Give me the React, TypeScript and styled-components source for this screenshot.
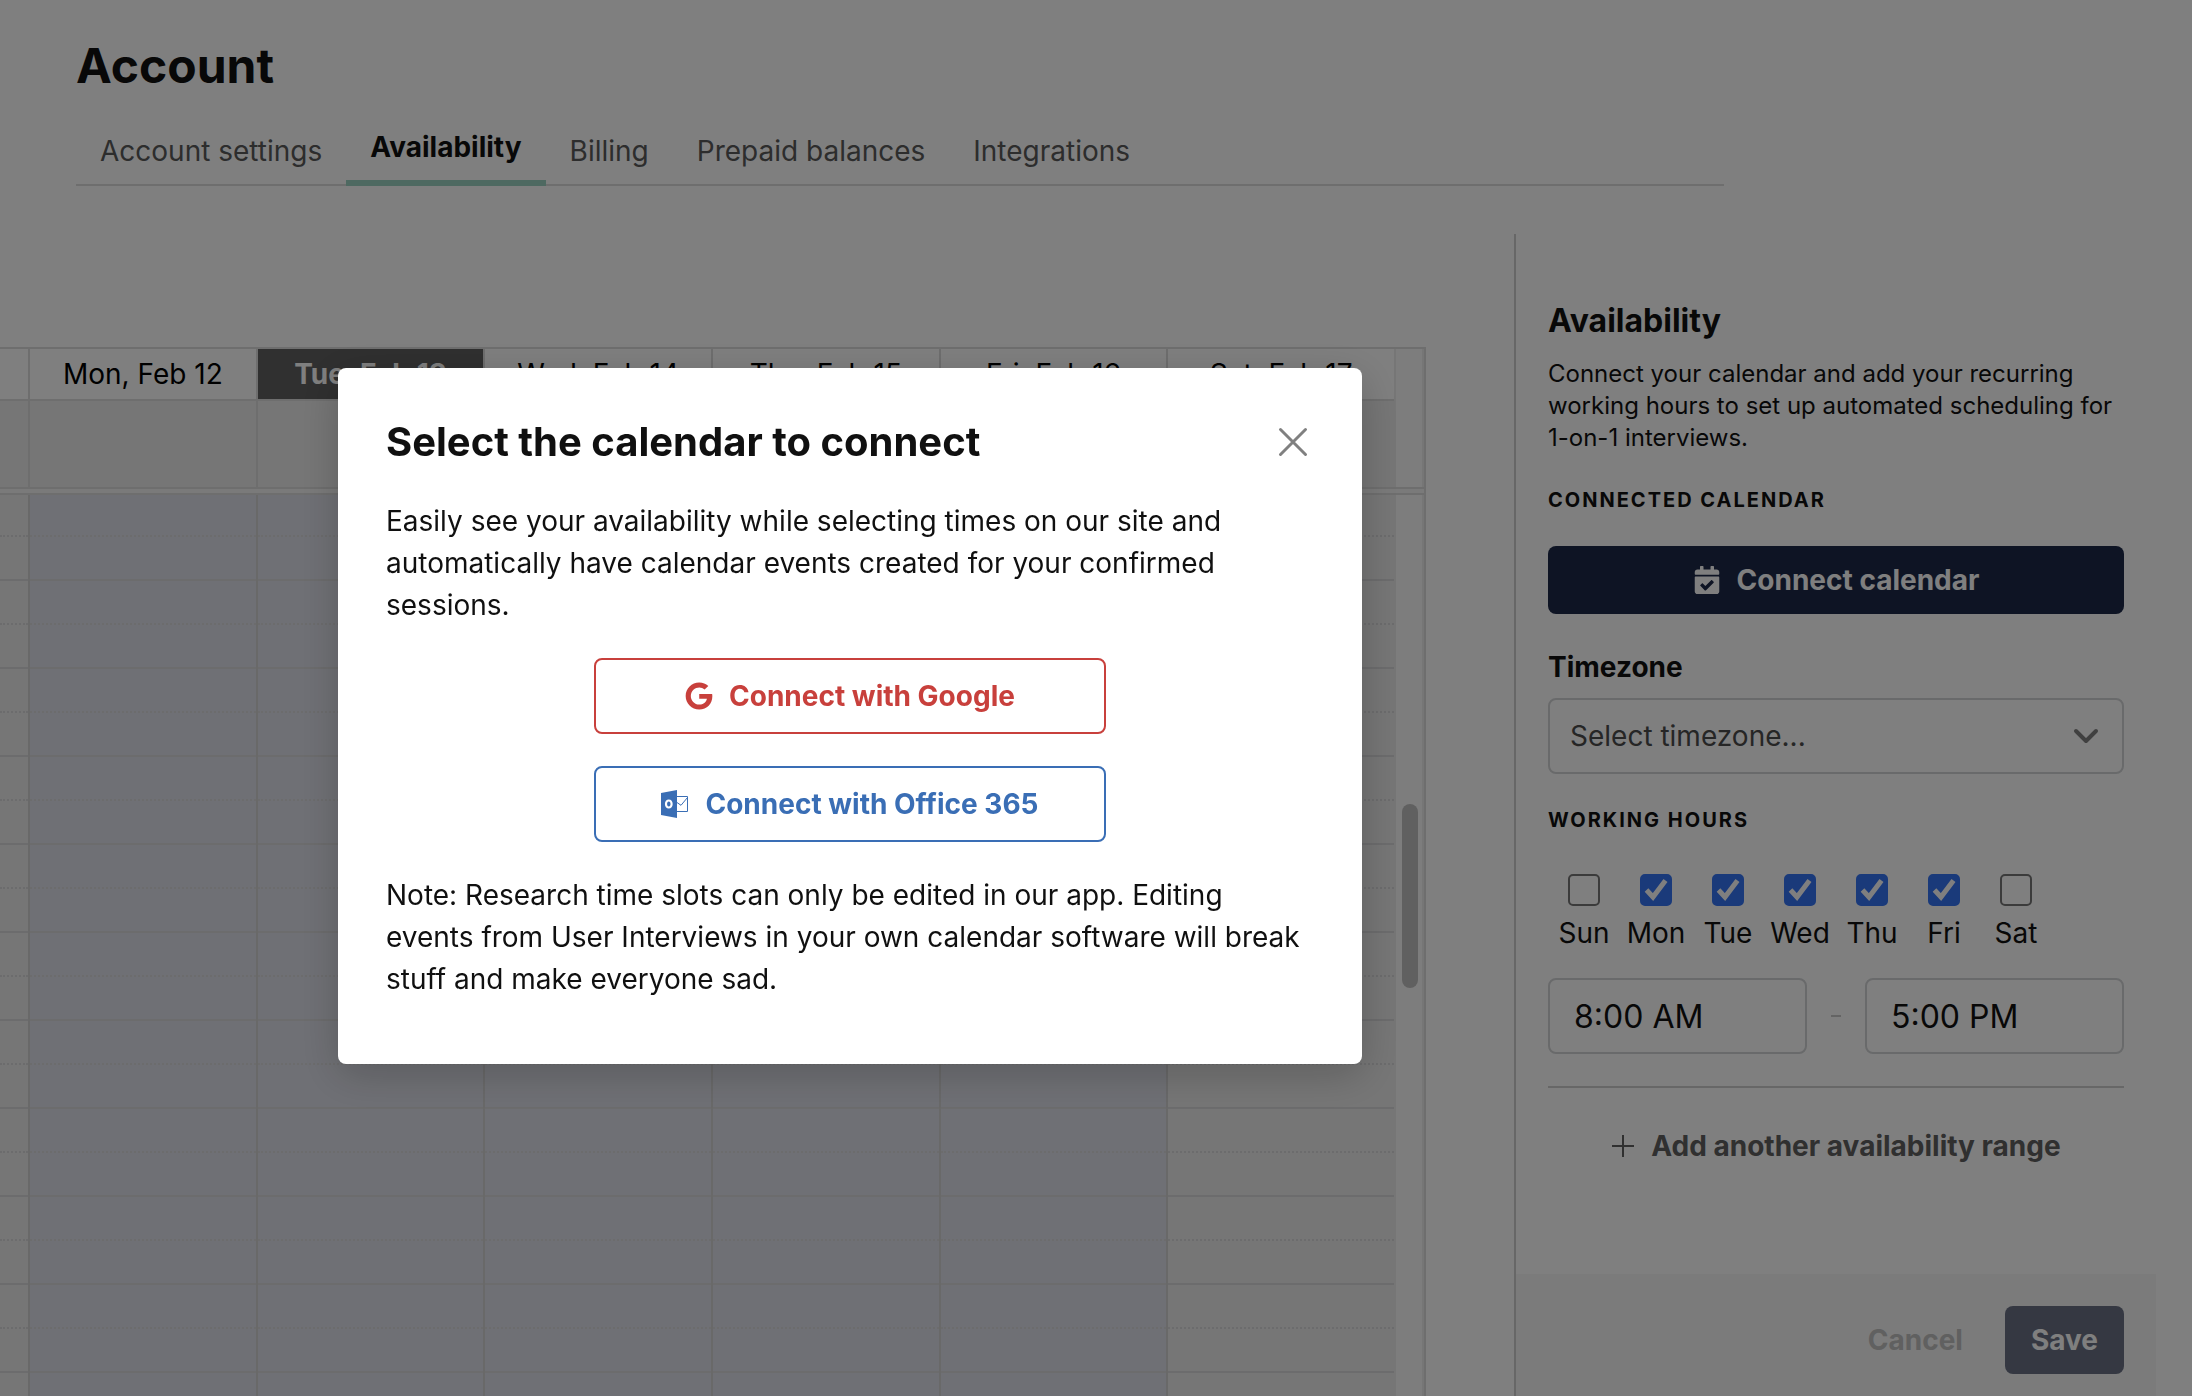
import React from "react";
import styled, { createGlobalStyle, css } from "styled-components";
import { FaCalendarCheck, FaGoogle } from "react-icons/fa";

const GlobalStyle = createGlobalStyle`
  *, *::before, *::after { box-sizing: border-box; }
  body {
    margin: 0;
    background: #fff;
    color: #101010;
    font-family: Inter, "Liberation Sans", sans-serif;
    font-size: 28px;
    line-height: 34px;
  }
  h1, h2, h3, p { margin: 0; }
  button, input, select { font: inherit; color: inherit; }
`;

const Page = styled.div`
  display: flex;
  flex-direction: column;
  height: 100vh;
  overflow: hidden;
`;

const Header = styled.header`
  padding: 36px 76px 0;
`;

const PageTitle = styled.h1`
  font-size: 48px;
  line-height: 60px;
  font-weight: 700;
`;

const Tabs = styled.nav`
  display: flex;
  align-items: flex-end;
  max-width: 1648px;
  height: 90px;
  border-bottom: 2px solid #dcdcdc;
`;

const Tab = styled.a<{ $active?: boolean }>`
  padding: 0 24px 16px;
  color: #5a5a5a;
  text-decoration: none;
  white-space: nowrap;
  ${(p) =>
    p.$active &&
    css`
      margin-bottom: -2px;
      border-bottom: 6px solid #9cd2c2;
      color: #101010;
      font-weight: 700;
    `}
`;

const Main = styled.main`
  display: flex;
  flex: 1;
  min-height: 0;
  gap: 88px;
  margin-top: 48px;
  padding-right: 36px;
`;

const Calendar = styled.section`
  display: flex;
  flex-direction: column;
  flex: 1;
  min-width: 0;
  margin-top: 113px;
  border-top: 2px solid #dcdcdc;
  border-right: 2px solid #dcdcdc;
  background: #fbfbfb;
  overflow: hidden;
`;

const WeekGrid = styled.div`
  display: grid;
  grid-template-columns: 28px repeat(6, minmax(0, 1fr)) 30px;
`;

const DayHeading = styled.div<{ $today?: boolean }>`
  display: flex;
  align-items: center;
  justify-content: center;
  height: 52px;
  border-left: 2px solid #dcdcdc;
  border-bottom: 2px solid #dcdcdc;
  background: #fff;
  color: #000;
  white-space: nowrap;
  &:first-child { border-left: 0; }
  ${(p) =>
    p.$today &&
    css`
      background: #606060;
      background-clip: padding-box;
      color: #fff;
      font-weight: 700;
    `}
`;

const Gutter = styled.div`
  border-left: 2px solid #ececec;
  border-right: 2px solid #ececec;
  background: #fbfbfb;
`;

const AllDayCell = styled.div`
  height: 86px;
  border-left: 2px solid #dcdcdc;
  background: #ececec;
  &:first-child { border-left: 0; }
`;

const Divider = styled.div`
  flex: none;
  height: 8px;
  border-top: 2px solid #dcdcdc;
  border-bottom: 2px solid #dcdcdc;
  background: #f4f4f4;
`;

const TimeGrid = styled(WeekGrid)`
  flex: 1;
  min-height: 0;
  overflow: hidden;
`;

const DayColumn = styled.div<{ $working?: boolean }>`
  border-left: 2px solid #d2d2d3;
  background: ${(p) => (p.$working ? "#dfe1ea" : "#ececec")};
  &:first-child { border-left: 0; }
`;

const Slot = styled.div`
  height: 44px;
  border-top: 2px solid #d8d8da;
  &:nth-child(even) { border-top-style: dotted; }
  &:first-child {
    height: 40px;
    border-top: 0;
  }
`;

const ScrollTrack = styled(Gutter)`
  display: flex;
  justify-content: center;
  align-items: flex-start;
  padding: 309px 0 0 2px;
`;

const ScrollThumb = styled.div`
  width: 16px;
  height: 184px;
  border-radius: 8px;
  background: #c1c1c1;
`;

const Sidebar = styled.aside`
  display: flex;
  flex-direction: column;
  width: 642px;
  flex: none;
  border-left: 2px solid #cfcfcf;
`;

const SidebarBody = styled.div`
  padding: 66px 32px 0;
`;

const SidebarTitle = styled.h2`
  font-size: 32px;
  line-height: 42px;
  font-weight: 700;
`;

const Intro = styled.p`
  margin-top: 16px;
  font-size: 24px;
  line-height: 32px;
`;

const Eyebrow = styled.h3`
  margin: 34px 0;
  font-size: 20px;
  line-height: 24px;
  font-weight: 700;
  letter-spacing: 2px;
  text-transform: uppercase;
`;

const Button = styled.button<{ $disabled?: boolean; $block?: boolean }>`
  display: flex;
  align-items: center;
  justify-content: center;
  gap: 16px;
  width: ${(p) => (p.$block ? "100%" : "auto")};
  height: 68px;
  padding: 0 26px;
  border: 0;
  border-radius: 8px;
  background: ${(p) => (p.$disabled ? "#6a7084" : "#1c2848")};
  color: #fff;
  font-weight: 700;
`;

const TextButton = styled(Button)<{ $muted?: boolean }>`
  background: none;
  color: ${(p) => (p.$muted ? "#c0c0c0" : "#606060")};
`;

const FieldLabel = styled.label`
  display: block;
  margin: 36px 0 14px;
  font-weight: 700;
`;

const SelectBox = styled.div`
  display: grid;
  align-items: center;
  > * { grid-area: 1 / 1; }
  > svg {
    justify-self: end;
    margin-right: 25px;
    pointer-events: none;
  }
`;

const field = css`
  width: 100%;
  min-width: 0;
  height: 76px;
  border: 2px solid #d2d4d6;
  border-radius: 8px;
  background: #fff;
  outline: 0;
`;

const Select = styled.select`
  ${field}
  padding: 0 20px;
  appearance: none;
  color: #4c4c4c;
`;

const Days = styled.div`
  display: flex;
`;

const Day = styled.label`
  display: flex;
  flex-direction: column;
  align-items: center;
  gap: 10px;
  width: 72px;
  padding-top: 8px;
`;

const CheckBox = styled.span`
  display: grid;
  width: 32px;
  height: 32px;
  > * { grid-area: 1 / 1; }
  > svg { visibility: hidden; pointer-events: none; }
  > input:checked + svg { visibility: visible; }
`;

const CheckInput = styled.input`
  width: 32px;
  height: 32px;
  margin: 0;
  appearance: none;
  border: 2px solid #767676;
  border-radius: 5px;
  background: #fff;
  &:checked {
    border-color: #3474f4;
    background: #3474f4;
  }
`;

const Hours = styled.div`
  display: grid;
  grid-template-columns: minmax(0, 1fr) 58px minmax(0, 1fr);
  align-items: center;
  margin-top: 28px;
  padding-bottom: 32px;
  border-bottom: 2px solid #cfcfcf;
`;

const TimeInput = styled.input`
  ${field}
  padding: 0 24px;
  font-size: 32px;
`;

const Dash = styled.span`
  justify-self: center;
  width: 10px;
  height: 2px;
  background: #c8c8c8;
`;

const AddRow = styled.div`
  padding-top: 24px;
`;

const SidebarFooter = styled.footer`
  display: flex;
  justify-content: flex-end;
  gap: 16px;
  margin-top: auto;
  padding: 32px 32px 22px;
  background: #f7f7f7;
`;

const Backdrop = styled.div`
  position: fixed;
  inset: 0;
  display: flex;
  align-items: flex-start;
  padding: 368px 0 0 338px;
  background: rgba(0, 0, 0, 0.5);
`;

const Modal = styled.div`
  width: 1024px;
  padding: 48px 48px 64px;
  border-radius: 8px;
  background: #fff;
  box-shadow: 0 10px 40px rgba(0, 0, 0, 0.2);
`;

const ModalHeader = styled.div`
  display: flex;
  align-items: center;
  justify-content: space-between;
  height: 52px;
`;

const ModalTitle = styled.h2`
  font-size: 40px;
  line-height: 48px;
  font-weight: 700;
`;

const CloseButton = styled.button`
  display: flex;
  padding: 6px;
  border: 0;
  background: none;
  color: #808080;
`;

const ModalText = styled.p`
  margin-top: 32px;
  line-height: 42px;
`;

const ConnectButton = styled.button<{ $color: string }>`
  display: flex;
  align-items: center;
  justify-content: center;
  gap: 16px;
  width: 512px;
  height: 76px;
  margin: 32px auto 0;
  border: 2px solid ${(p) => p.$color};
  border-radius: 8px;
  background: #fff;
  color: ${(p) => p.$color};
  font-weight: 700;
`;

const OutlookIcon = () => (
  <svg width="28" height="28" viewBox="0 0 28 28" fill="none" aria-hidden="true">
    <path
      fill="currentColor"
      fillRule="evenodd"
      d="M0 3 16 0v28L0 25ZM7.8 9.4c-2.4 0-3.9 2-3.9 4.6s1.5 4.6 3.9 4.6 3.9-2 3.9-4.6-1.5-4.6-3.9-4.6Zm0 2.1c1.1 0 1.7 1 1.7 2.5s-.6 2.5-1.7 2.5-1.7-1-1.7-2.5.6-2.5 1.7-2.5Z"
    />
    <path stroke="currentColor" d="M16 6.500h10.500v15H16M16 12.500l4 2.800 6.500-7.800" />
  </svg>
);

const headings = [
  "",
  "Mon, Feb 12",
  "Tue, Feb 13",
  "Wed, Feb 14",
  "Thu, Feb 15",
  "Fri, Feb 16",
  "Sat, Feb 17",
];
const slots = Array.from({ length: 22 }, (_, i) => i);
const days = ["Sun", "Mon", "Tue", "Wed", "Thu", "Fri", "Sat"];
const isWorkday = (i: number) => i > 0 && i < 6;

const tabs = ["Account settings", "Availability", "Billing", "Prepaid balances", "Integrations"];

export default function App() {
  return (
    <>
      <GlobalStyle />
      <Page>
        <Header>
          <PageTitle>Account</PageTitle>
          <Tabs>
            {tabs.map((t) => (
              <Tab key={t} href="#" $active={t === "Availability"}>
                {t}
              </Tab>
            ))}
          </Tabs>
        </Header>
        <Main>
          <Calendar aria-label="Week of February 12">
            <WeekGrid>
              {headings.map((h, i) => (
                <DayHeading key={i} $today={i === 2}>
                  {h}
                </DayHeading>
              ))}
              <Gutter />
            </WeekGrid>
            <WeekGrid>
              {headings.map((_, i) => (
                <AllDayCell key={i} />
              ))}
              <Gutter />
            </WeekGrid>
            <Divider />
            <TimeGrid>
              {headings.map((_, i) => (
                <DayColumn key={i} $working={isWorkday(i)}>
                  {slots.map((s) => (
                    <Slot key={s} />
                  ))}
                </DayColumn>
              ))}
              <ScrollTrack>
                <ScrollThumb />
              </ScrollTrack>
            </TimeGrid>
          </Calendar>
          <Sidebar>
            <SidebarBody>
              <SidebarTitle>Availability</SidebarTitle>
              <Intro>
                Connect your calendar and add your recurring working hours to set up automated
                scheduling for 1-on-1 interviews.
              </Intro>
              <Eyebrow>Connected calendar</Eyebrow>
              <Button type="button" $block>
                <FaCalendarCheck size={28} aria-hidden="true" />
                Connect calendar
              </Button>
              <FieldLabel htmlFor="timezone">Timezone</FieldLabel>
              <SelectBox>
                <Select id="timezone" defaultValue="">
                  <option value="">Select timezone...</option>
                </Select>
                <svg width="26" height="18" viewBox="0 0 26 18" fill="none" aria-hidden="true">
                  <path
                    d="m3 4 10 10L23 4"
                    stroke="#808080"
                    strokeWidth="4"
                    strokeLinecap="round"
                    strokeLinejoin="round"
                  />
                </svg>
              </SelectBox>
              <Eyebrow>Working hours</Eyebrow>
              <Days>
                {days.map((d, i) => (
                  <Day key={d}>
                    <CheckBox>
                      <CheckInput type="checkbox" defaultChecked={isWorkday(i)} />
                      <svg width="32" height="32" viewBox="0 0 32 32" fill="none" aria-hidden="true">
                        <path d="m6.500 16 6.500 7L25.500 6.500" stroke="#fff" strokeWidth="5" />
                      </svg>
                    </CheckBox>
                    {d}
                  </Day>
                ))}
              </Days>
              <Hours>
                <TimeInput aria-label="Start time" defaultValue="8:00 AM" />
                <Dash />
                <TimeInput aria-label="End time" defaultValue="5:00 PM" />
              </Hours>
              <AddRow>
                <TextButton type="button" $block>
                  <svg width="24" height="24" viewBox="0 0 24 24" fill="none" aria-hidden="true">
                    <path d="M12 1v22M1 12h22" stroke="currentColor" strokeWidth="2" />
                  </svg>
                  Add another availability range
                </TextButton>
              </AddRow>
            </SidebarBody>
            <SidebarFooter>
              <TextButton type="button" $muted>
                Cancel
              </TextButton>
              <Button type="button" $disabled>
                Save
              </Button>
            </SidebarFooter>
          </Sidebar>
        </Main>
      </Page>
      <Backdrop>
        <Modal role="dialog" aria-modal="true" aria-labelledby="connect-title">
          <ModalHeader>
            <ModalTitle id="connect-title">Select the calendar to connect</ModalTitle>
            <CloseButton type="button" aria-label="Close">
              <svg width="30" height="30" viewBox="0 0 30 30" fill="none" aria-hidden="true">
                <path
                  d="m2.500 2.500 25 25M27.500 2.500l-25 25"
                  stroke="currentColor"
                  strokeWidth="3"
                  strokeLinecap="round"
                />
              </svg>
            </CloseButton>
          </ModalHeader>
          <ModalText>
            Easily see your availability while selecting times on our site and automatically have
            calendar events created for your confirmed sessions.
          </ModalText>
          <ConnectButton type="button" $color="#c8403c">
            <FaGoogle size={28} aria-hidden="true" />
            Connect with Google
          </ConnectButton>
          <ConnectButton type="button" $color="#3a6eb5">
            <OutlookIcon />
            Connect with Office 365
          </ConnectButton>
          <ModalText>
            Note: Research time slots can only be edited in our app. Editing events from User
            Interviews in your own calendar software will break stuff and make everyone sad.
          </ModalText>
        </Modal>
      </Backdrop>
    </>
  );
}
